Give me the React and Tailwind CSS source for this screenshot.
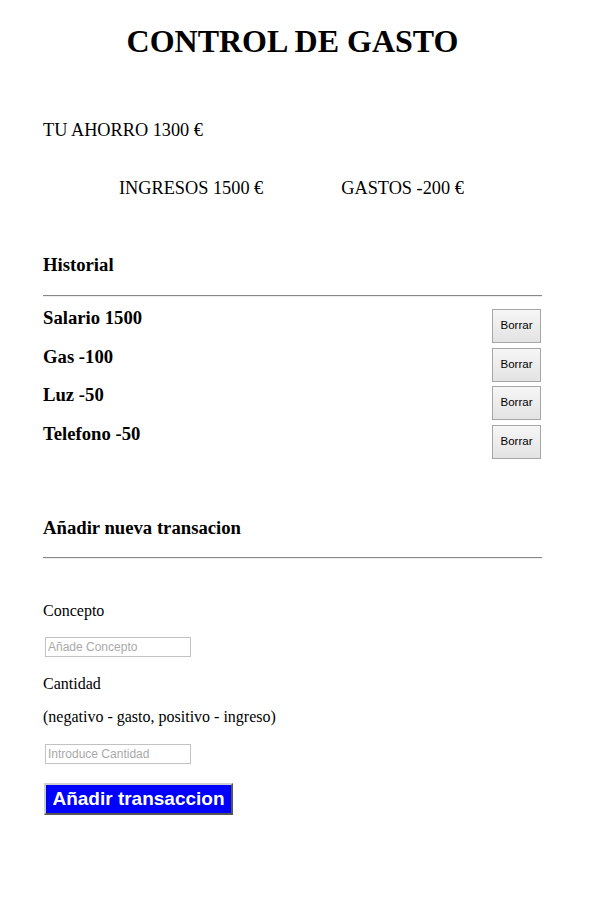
import React from "react";

const serif = { fontFamily: '"Liberation Serif", "Times New Roman", serif' };

function Item({ label }) {
  return (
    <div className="flex h-[38.5px] items-start justify-between">
      <h3 className="m-0 text-[18.7px] font-bold leading-[24px] mt-[-3px]">{label}</h3>
      <button className="mr-[1px] h-[34px] w-[49px] border border-[#a6a6a6] bg-gradient-to-b from-[#f6f6f6] to-[#e3e3e3] text-[11.5px] text-black [font-family:'Liberation_Sans',Arial,sans-serif]">
        Borrar
      </button>
    </div>
  );
}

export default function App() {
  return (
    <div className="min-h-[924px] w-[611px] bg-white text-black" style={serif}>
      <div className="ml-[43px] w-[499px] pt-[23px]">
        <h1 className="m-0 text-center text-[32px] font-bold leading-[37px]">CONTROL DE GASTO</h1>
        <div className="mt-[61px] text-[18.3px] leading-[19px]">TU AHORRO 1300 €</div>
        <div className="mt-[39px] flex text-[18.3px] leading-[19px]">
          <span className="ml-[76px]">INGRESOS 1500 €</span>
          <span className="ml-[78px]">GASTOS -200 €</span>
        </div>
        <h3 className="mt-[56px] text-[18.7px] font-bold leading-[22px]">Historial</h3>
        <hr className="mt-[19px] border-0 border-t border-[#888] shadow-[0_1px_0_#eee]" />
        <div className="mt-[13px]">
          <Item label="Salario 1500" />
          <Item label="Gas -100" />
          <Item label="Luz -50" />
          <Item label="Telefono -50" />
        </div>
        <h3 className="mt-[54px] text-[18.7px] font-bold leading-[22px]">Añadir nueva transacion</h3>
        <hr className="mt-[18px] border-0 border-t border-[#888] shadow-[0_1px_0_#eee]" />
        <div className="mt-[43px] text-[16px] leading-[19px]">Concepto</div>
        <input
          placeholder="Añade Concepto"
          className="ml-[2px] mt-[17px] block h-[20px] w-[146px] border border-[#c2c2c2] px-[2px] text-[12px] outline-none placeholder:text-[#a9a9a9] [font-family:'Liberation_Sans',Arial,sans-serif]"
        />
        <div className="mt-[17px] text-[16px] leading-[19px]">Cantidad</div>
        <div className="mt-[14px] text-[16px] leading-[19px]">(negativo - gasto, positivo - ingreso)</div>
        <input
          placeholder="Introduce Cantidad"
          className="ml-[2px] mt-[18px] block h-[20px] w-[146px] border border-[#c2c2c2] px-[2px] text-[12px] outline-none placeholder:text-[#a9a9a9] [font-family:'Liberation_Sans',Arial,sans-serif]"
        />
        <button className="ml-[1px] mt-[19px] block h-[32px] w-[189px] border-2 border-t-[#d0d0d0] border-l-[#d0d0d0] border-r-[#555] border-b-[#555] bg-[#0000ff] text-[19px] font-bold leading-[26px] text-white [font-family:'Liberation_Sans',Arial,sans-serif]">
          Añadir transaccion
        </button>
      </div>
    </div>
  );
}
